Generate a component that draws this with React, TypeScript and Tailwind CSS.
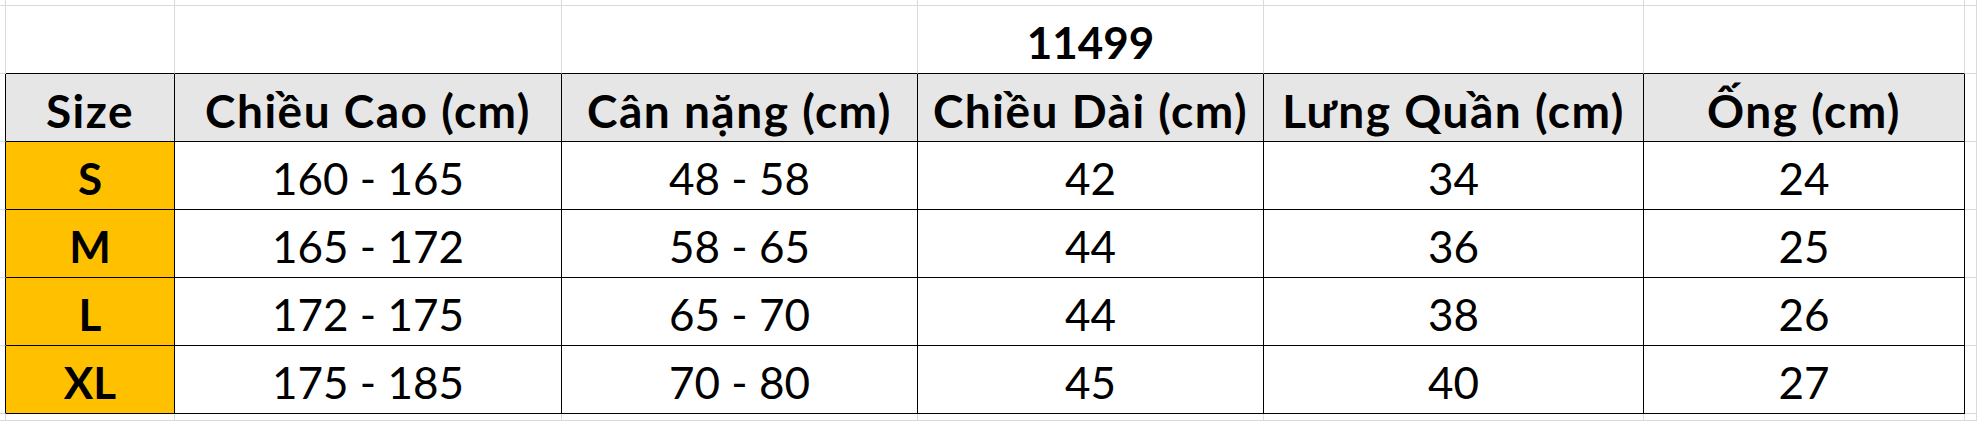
import React from "react";

const colWidths = [6, 169, 387, 356, 346, 380, 321, 12];
const rowHeights = [6, 68, 68, 68, 68, 68, 68, 7];

const header = ["Size", "Chiều Cao (cm)", "Cân nặng (cm)", "Chiều Dài (cm)", "Lưng Quần (cm)", "Ống (cm)"];
const rows = [
  ["S", "160 - 165", "48 - 58", "42", "34", "24"],
  ["M", "165 - 172", "58 - 65", "44", "36", "25"],
  ["L", "172 - 175", "65 - 70", "44", "38", "26"],
  ["XL", "175 - 185", "70 - 80", "45", "40", "27"],
];

// table lives in grid rows 2..6 and columns 1..6
const inTable = (r: number, c: number) => r >= 2 && r <= 6 && c >= 1 && c <= 6;

const App = () => {
  const cells: React.ReactNode[] = [];

  for (let r = 0; r < rowHeights.length; r++) {
    for (let c = 0; c < colWidths.length; c++) {
      const blackRight = inTable(r, c) || inTable(r, c + 1);
      const blackBottom = inTable(r, c) || inTable(r + 1, c);

      let text = "";
      let kind = "data";
      let bg = "bg-white";

      if (r === 1 && c === 4) {
        text = "11499";
        kind = "bold";
      } else if (r === 2 && inTable(r, c)) {
        text = header[c - 1];
        kind = "header";
        bg = "bg-[#e7e6e6]";
      } else if (inTable(r, c)) {
        text = rows[r - 3][c - 1];
        if (c === 1) {
          kind = "bold";
          bg = "bg-[#ffc000]";
        }
      }

      const textClass =
        kind === "header"
          ? "pb-[7px] text-[46px] font-bold tracking-[1.5px]"
          : kind === "bold"
          ? "pb-[9px] text-[44px] font-bold"
          : "pb-[9px] text-[44px] font-normal";

      cells.push(
        <div
          key={`${r}-${c}`}
          className={`flex items-end justify-center overflow-visible whitespace-nowrap border-r border-b ${bg} ${
            blackRight ? "border-r-black" : "border-r-[#dadada]"
          } ${blackBottom ? "border-b-black" : "border-b-[#dadada]"}`}
        >
          {text && <span className={`block leading-none text-black ${textClass}`}>{text}</span>}
        </div>
      );
    }
  }

  return (
    <div
      className="grid w-[1977px] h-[421px] overflow-hidden bg-white font-['Lato',sans-serif]"
      style={{
        gridTemplateColumns: colWidths.map((w) => `${w}px`).join(" "),
        gridTemplateRows: rowHeights.map((h) => `${h}px`).join(" "),
      }}
    >
      {cells}
    </div>
  );
};

export default App;
